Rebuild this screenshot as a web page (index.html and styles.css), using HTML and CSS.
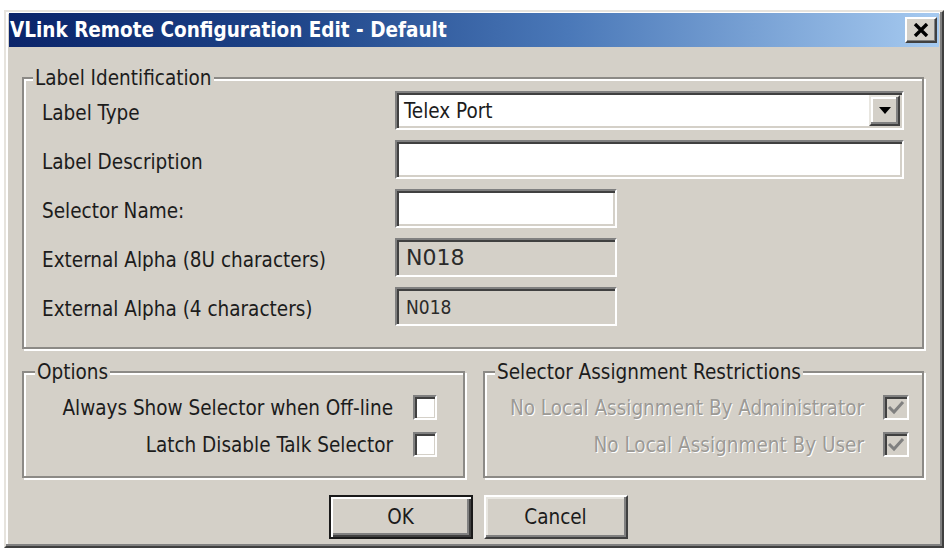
FILE: index.html
```html
<!DOCTYPE html>
<html>
<head>
<meta charset="utf-8">
<title>VLink Remote Configuration Edit - Default</title>
<link rel="stylesheet" href="styles.css">
</head>
<body>
<div class="window">
  <div class="titlebar">
    <span class="title">VLink Remote Configuration Edit - Default</span>
    <div class="close" aria-label="Close">
      <svg width="16" height="14" viewBox="0 0 16 14"><path d="M2 1 L14 13 M14 1 L2 13" stroke="#000" stroke-width="3.4" fill="none"/></svg>
    </div>
  </div>
  <div class="client">
    <fieldset class="group ident">
      <legend>Label Identification</legend>
      <div class="ident-grid">
        <span class="lbl">Label Type</span>
        <div class="combo">
          <span class="combo-text">Telex Port</span>
          <div class="combo-btn"><svg width="14" height="8" viewBox="0 0 14 8"><path d="M1 0 L13 0 L7 7 Z" fill="#000"/></svg></div>
        </div>
        <span class="lbl">Label Description</span>
        <div class="field"></div>
        <span class="lbl">Selector Name:</span>
        <div class="field short"></div>
        <span class="lbl">External Alpha (8U characters)</span>
        <div class="field short ro"><span class="val big">N018</span></div>
        <span class="lbl">External Alpha (4 characters)</span>
        <div class="field short ro"><span class="val">N018</span></div>
      </div>
    </fieldset>
    <div class="lower">
      <fieldset class="group options">
        <legend>Options</legend>
        <div class="checks">
          <div class="check-row"><span>Always Show Selector when Off-line</span><span class="cb"></span></div>
          <div class="check-row"><span>Latch Disable Talk Selector</span><span class="cb"></span></div>
        </div>
      </fieldset>
      <fieldset class="group restrict">
        <legend>Selector Assignment Restrictions</legend>
        <div class="checks">
          <div class="check-row disabled"><span>No Local Assignment By Administrator</span><span class="cb dis"><svg width="18" height="16" viewBox="0 0 18 16"><path d="M2 7 L7 12 L16 2" stroke="#808080" stroke-width="3" fill="none"/></svg></span></div>
          <div class="check-row disabled"><span>No Local Assignment By User</span><span class="cb dis"><svg width="18" height="16" viewBox="0 0 18 16"><path d="M2 7 L7 12 L16 2" stroke="#808080" stroke-width="3" fill="none"/></svg></span></div>
        </div>
      </fieldset>
    </div>
    <div class="buttons">
      <div class="btn default"><span>OK</span></div>
      <div class="btn"><span>Cancel</span></div>
    </div>
  </div>
</div>
</body>
</html>
```
FILE: styles.css
```css
html, body {
  margin: 0;
  padding: 0;
  background: #ffffff;
}
body {
  font-family: "DejaVu Sans Condensed", "DejaVu Sans", sans-serif;
  font-size: 20.5px;
  color: #1c1c1c;
}
.window {
  box-sizing: border-box;
  margin: 10px 0 0 4px;
  width: 940px;
  height: 538px;
  background: #d4d0c8;
  border: 2px solid;
  border-color: #e6e3dd #404040 #404040 #e6e3dd;
  box-shadow: inset -2px -2px 0 #808080, inset 2px 2px 0 #ffffff;
  padding: 1px 3px 0 3px;
  display: flex;
  flex-direction: column;
}
.titlebar {
  height: 34px;
  flex: none;
  background: linear-gradient(to right, #0a246a 0%, #1e4488 30%, #4a78b8 60%, #a6caf0 100%);
  display: flex;
  align-items: center;
  justify-content: space-between;
  padding: 0 2px 0 1px;
}
.title {
  color: #ffffff;
  font-weight: bold;
  font-size: 20.5px;
  letter-spacing: 0;
}
.close {
  box-sizing: border-box;
  width: 32px;
  height: 26px;
  background: #d4d0c8;
  border: 2px solid;
  border-color: #ffffff #404040 #404040 #ffffff;
  box-shadow: inset -1px -1px 0 #808080;
  display: flex;
  align-items: center;
  justify-content: center;
}
.client {
  padding: 0 15px 0 13px;
  display: flex;
  flex-direction: column;
}
.group {
  margin: 0;
  padding: 0;
  min-width: 0;
  border: 2px solid #8c8a86;
  box-shadow: 2px 2px 0 #ffffff, inset 2px 2px 0 #ffffff;
}
.group legend {
  padding: 0 2px;
  margin-left: 9px;
  line-height: 22px;
  background: #d4d0c8;
}
.ident {
  margin-top: 20px;
}
.ident-grid {
  display: grid;
  grid-template-columns: 353px 1fr;
  grid-auto-rows: 39px;
  row-gap: 10px;
  align-items: center;
  padding: 2px 18px 21px 18px;
}
.lbl {
  padding-top: 4px;
}
.field, .combo {
  box-sizing: border-box;
  height: 39px;
  background: #ffffff;
  border: 2px solid;
  border-color: #808080 #ffffff #ffffff #808080;
  box-shadow: inset 2px 2px 0 #404040, inset -2px -2px 0 #d4d0c8;
  display: flex;
  align-items: center;
}
.short {
  width: 222px;
}
.ro {
  background: #d4d0c8;
}
.val {
  padding-left: 9px;
  font-size: 19px;
  color: #2a2a2a;
}
.val.big {
  font-family: "DejaVu Sans", sans-serif;
  font-size: 22px;
}
.combo {
  justify-content: space-between;
  padding: 0 2px 0 5px;
}
.combo-text {
  padding-left: 2px;
}
.combo-btn {
  box-sizing: border-box;
  width: 31px;
  height: 31px;
  background: #d4d0c8;
  border: 2px solid;
  border-color: #e8e6e0 #404040 #404040 #e8e6e0;
  box-shadow: inset -2px -2px 0 #808080, inset 2px 2px 0 #ffffff;
  display: flex;
  align-items: center;
  justify-content: center;
}
.lower {
  display: grid;
  grid-template-columns: 443px 1fr;
  column-gap: 18px;
  margin-top: 12px;
}
.options legend {
  margin-left: 11px;
}
.restrict legend {
  margin-left: 10px;
}
.checks {
  display: flex;
  flex-direction: column;
  align-items: flex-end;
  gap: 12px;
  padding: 12px 26px 19px 10px;
}
.restrict .checks {
  padding-right: 13px;
}
.check-row {
  display: flex;
  align-items: center;
  gap: 20px;
  height: 25px;
}
.restrict .check-row {
  gap: 19px;
}
.check-row.disabled span:first-child {
  color: #9c9a96;
  text-shadow: 1px 1px 0 #ffffff;
}
.cb {
  box-sizing: border-box;
  width: 24px;
  height: 25px;
  background: #ffffff;
  border: 2px solid;
  border-color: #808080 #ffffff #ffffff #808080;
  box-shadow: inset 2px 2px 0 #404040, inset -1px -1px 0 #d4d0c8;
  display: flex;
  align-items: center;
  justify-content: center;
}
.restrict .cb {
  width: 26px;
}
.cb.dis {
  background: #d4d0c8;
}
.buttons {
  display: flex;
  justify-content: center;
  gap: 11px;
  margin-top: 17px;
  padding-left: 10px;
}
.btn {
  box-sizing: border-box;
  width: 144px;
  height: 44px;
  background: #d4d0c8;
  border: 2px solid;
  border-color: #ffffff #404040 #404040 #ffffff;
  box-shadow: inset -2px -2px 0 #808080, inset 2px 2px 0 #e8e6e0;
  display: flex;
  align-items: center;
  justify-content: center;
  font-size: 20.5px;
}
.btn.default {
  border: 2px solid #1a1a1a;
  box-shadow: inset 2px 2px 0 #ffffff, inset -2px -2px 0 #404040, inset -4px -4px 0 #808080;
}
```
